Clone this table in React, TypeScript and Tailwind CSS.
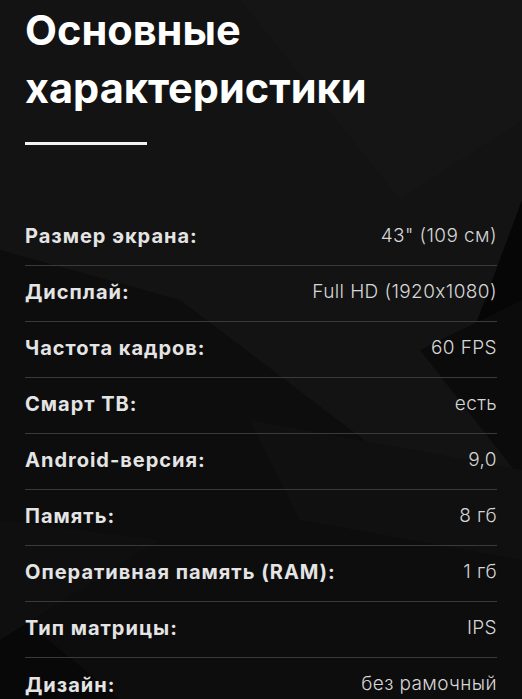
import React from "react";

const rows: [string, string][] = [
  ["Размер экрана:", "43\" (109 см)"],
  ["Дисплай:", "Full HD (1920x1080)"],
  ["Частота кадров:", "60 FPS"],
  ["Смарт ТВ:", "есть"],
  ["Android-версия:", "9,0"],
  ["Память:", "8 гб"],
  ["Оперативная память (RAM):", "1 гб"],
  ["Тип матрицы:", "IPS"],
  ["Дизайн:", "без рамочный"],
];

export default function App() {
  return (
    <div
      className="relative w-[522px] h-[699px] overflow-hidden bg-[#131313] [font-feature-settings:'calt'_0]"
      style={{ fontFamily: "Inter, 'Noto Sans', sans-serif" }}
    >
      <svg
        className="absolute inset-0 pointer-events-none"
        width="522"
        height="699"
        viewBox="0 0 522 699"
      >
        <polygon points="0,250 180,300 522,560 522,699 0,699" fill="#0d0d0d" />
        <polygon points="0,600 120,699 0,699" fill="#080808" />
        <polygon points="522,200 470,340 522,420" fill="#060606" />
        <polygon points="420,350 522,300 522,480" fill="#0b0b0b" />
        <polygon points="250,420 522,470 522,560 300,520" fill="#101010" />
        <polygon points="0,520 160,540 0,640" fill="#0f0f0f" />
        <polygon points="240,0 522,0 522,120 400,200" fill="#151515" />
      </svg>
      <div className="relative px-[25px]">
        <h1 className="text-[41.5px] leading-[58px] font-bold text-white pt-[1px]">
          Основные
          <br />
          характеристики
        </h1>
        <div className="mt-[25px] h-[3px] w-[122px] bg-[#f2f2f2]" />
        <div className="mt-[65px] w-[472px]">
          {rows.map(([k, v], i) => (
            <div
              key={k}
              className={
                "h-[56px] pb-[3px] flex items-center justify-between " +
                (i < rows.length - 1 ? "border-b border-[#3a3a3a]" : "")
              }
            >
              <span className="text-[20px] font-bold tracking-[1px] text-[#e4e4e4]">{k}</span>
              <span className="text-[19px] font-light tracking-[0.4px] text-[#d6d6d6]">{v}</span>
            </div>
          ))}
        </div>
      </div>
    </div>
  );
}
